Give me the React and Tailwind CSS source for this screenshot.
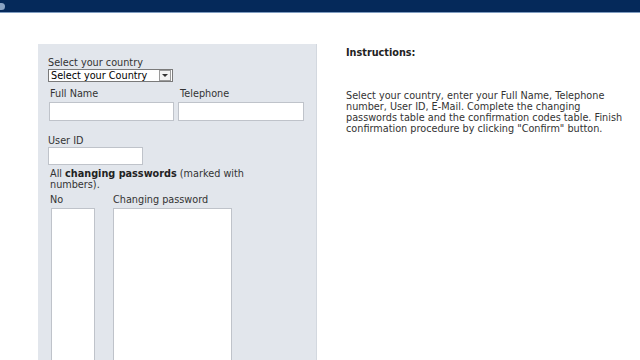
export default function App() {
  const font = { fontFamily: '"DejaVu Sans", Verdana, sans-serif' };
  return (
    <div className="w-[640px] h-[360px] overflow-hidden bg-white text-[9.7px] leading-[11px] text-[#333]" style={font}>
      <div className="h-[13px] bg-[#05295a] border-b border-[#7f9cc0] flex items-center">
        <div className="w-[5px] h-[7px] rounded-r-full bg-[#8aa3c4]" />
      </div>
      <div className="flex items-start">
        <div className="ml-[38px] mt-[31px] w-[279px] h-[330px] bg-[#e2e6ec] border-r border-[#d3d8df] pl-[10px] pt-[13px]">
          <div>Select your country</div>
          <div className="flex items-center w-[125px] h-[13px] bg-white border border-[#7a7a7a] mt-[1px]">
            <span className="flex-1 pl-[2px] text-black whitespace-nowrap">Select your Country</span>
            <span className="w-[12px] h-[11px] border border-[#9a9a9a] mr-[1px] flex items-center justify-center bg-[#f2f2f2]">
              <span className="w-0 h-0 border-l-[3px] border-r-[3px] border-t-[3px] border-l-transparent border-r-transparent border-t-[#333]" />
            </span>
          </div>
          <div className="flex gap-[4px] mt-[6px]">
            <div className="w-[126px]">
              <div className="pl-[2px]">Full Name</div>
              <div className="h-[19px] bg-white border border-[#bfc3ca] mt-[3px] ml-[1px]" />
            </div>
            <div className="w-[126px]">
              <div className="pl-[2px]">Telephone</div>
              <div className="h-[19px] bg-white border border-[#bfc3ca] mt-[3px]" />
            </div>
          </div>
          <div className="mt-[14px]">User ID</div>
          <div className="w-[95px] h-[18px] bg-white border border-[#bfc3ca] mt-[1px]" />
          <div className="mt-[3px] pl-[2px]">
            All <b className="text-[#222]">changing passwords</b> (marked with<br />numbers).
          </div>
          <div className="flex mt-[4px] pl-[2px]">
            <div className="w-[63px]">
              <div>No</div>
              <div className="w-[44px] h-[160px] bg-white border border-[#bfc3ca] mt-[3px] ml-[1px]" />
            </div>
            <div>
              <div>Changing password</div>
              <div className="w-[119px] h-[160px] bg-white border border-[#bfc3ca] mt-[3px]" />
            </div>
          </div>
        </div>
        <div className="ml-[29px] mt-[34px]">
          <div className="font-bold text-[#222]">Instructions:</div>
          <p className="mt-[32px] whitespace-nowrap">
            Select your country, enter your Full Name, Telephone<br />
            number, User ID, E-Mail. Complete the changing<br />
            passwords table and the confirmation codes table. Finish<br />
            confirmation procedure by clicking "Confirm" button.
          </p>
        </div>
      </div>
    </div>
  );
}
